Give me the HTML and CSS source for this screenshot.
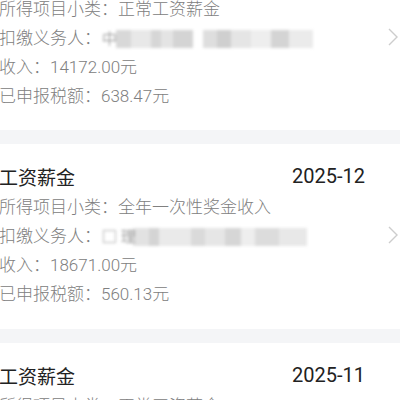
FILE: index.html
```html
<!DOCTYPE html>
<html lang="zh-CN">
<head>
  <meta charset="UTF-8">
  <meta name="viewport" content="width=device-width, initial-scale=1.0">
  <title>收入纳税明细</title>
  <link rel="stylesheet" href="styles.css">
</head>
<body>
  <main class="record-list">
    <!-- 上一条记录（只露出下半部分） -->
    <section class="record record-partial">
      <p class="record-line">所得项目小类：正常工资薪金</p>
      <div class="record-line payer-row">
        <span>扣缴义务人：</span>
        <span class="masked masked-a">中</span>
        <svg class="chevron" width="12" height="20" viewBox="0 0 12 20"><polyline points="2,2 10,10 2,18" fill="none" stroke="#cdcdcd" stroke-width="1.4"/></svg>
      </div>
      <p class="record-line">收入：14172.00元</p>
      <p class="record-line">已申报税额：638.47元</p>
    </section>
    <div class="divider"></div>

    <section class="record">
      <div class="record-head">
        <h2 class="record-title">工资薪金</h2>
        <span class="record-month">2025-12</span>
      </div>
      <p class="record-line">所得项目小类：全年一次性奖金收入</p>
      <div class="record-line payer-row">
        <span>扣缴义务人：</span>
        <span class="masked masked-b">□ 理</span>
        <svg class="chevron" width="12" height="20" viewBox="0 0 12 20"><polyline points="2,2 10,10 2,18" fill="none" stroke="#cdcdcd" stroke-width="1.4"/></svg>
      </div>
      <p class="record-line">收入：18671.00元</p>
      <p class="record-line">已申报税额：560.13元</p>
    </section>
    <div class="divider"></div>

    <section class="record">
      <div class="record-head">
        <h2 class="record-title">工资薪金</h2>
        <span class="record-month">2025-11</span>
      </div>
      <p class="record-line">所得项目小类：正常工资薪金</p>
    </section>
  </main>
</body>
</html>
```

FILE: styles.css
```css
:root {
  --color-title: #222222;
  --color-text: #808080;
  --color-divider: #f4f5f7;
}
* {
  margin: 0;
  padding: 0;
  box-sizing: border-box;
}
body {
  background-color: #ffffff;
  font-family: Roboto, "Noto Sans CJK SC", sans-serif;
  overflow: hidden;
}
.record-list {
  display: flex;
  flex-direction: column;
  width: 400px;
}
.record {
  padding: 15px 35px 20px 0;
  margin-left: -1px;
}
.record-partial {
  margin-top: -5px;
  padding-top: 0;
  padding-bottom: 19px;
}
.divider {
  height: 14px;
  background-color: var(--color-divider);
}
.record-head {
  display: flex;
  justify-content: space-between;
  align-items: center;
  height: 34px;
}
.record-title {
  font-size: 19px;
  font-weight: 400;
  color: var(--color-title);
}
.record-month {
  font-size: 20px;
  font-weight: 400;
  color: var(--color-title);
}
.record-line {
  font-size: 17px;
  font-weight: 300;
  line-height: 29px;
  height: 29px;
  color: var(--color-text);
  white-space: nowrap;
}
.payer-row {
  display: flex;
  align-items: center;
  position: relative;
}
.masked {
  width: 222px;
  height: 18px;
  font-size: 15px;
  line-height: 18px;
  color: #777;
  padding-left: 1px;
}
.masked-a {
  background:
    linear-gradient(90deg,
      transparent 0 15px,
      #d8d8d8 15px 30px,
      #e8e8e8 30px 50px,
      #d6d6d6 50px 60px,
      #e4e4e4 60px 72px,
      #d4d4d4 72px 92px,
      #ffffff 92px 102px,
      #dedede 102px 116px,
      #cfcfcf 116px 130px,
      #e5e5e5 130px 150px,
      #eeeeee 150px 170px,
      #d4d4d4 170px 188px,
      #ebebeb 188px 212px,
      transparent 212px);
  filter: blur(1.6px);
}
.masked-b {
  background:
    linear-gradient(90deg,
      transparent 0 32px,
      #e2e2e2 32px 48px,
      #d4d4d4 48px 58px,
      #eaeaea 58px 90px,
      #dadada 90px 104px,
      #e6e6e6 104px 124px,
      #d6d6d6 124px 140px,
      #eeeeee 140px 154px,
      #dcdcdc 154px 178px,
      #e8e8e8 178px 206px,
      transparent 206px);
  filter: blur(1.6px);
}
.chevron {
  position: absolute;
  right: -34px;
  top: 3px;
}
```
